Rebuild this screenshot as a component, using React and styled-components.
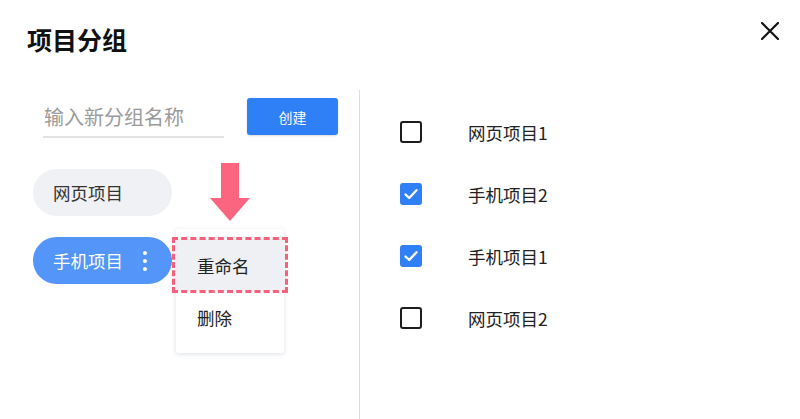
import React from "react";
import styled, { createGlobalStyle } from "styled-components";

const Global = createGlobalStyle`
  html, body { margin: 0; padding: 0; background: #fff; }
  * { box-sizing: border-box; }
  body { font-family: "Noto Sans CJK SC", "Noto Sans", sans-serif; }
`;

const Page = styled.div`
  width: 800px;
  height: 419px;
  background: #fff;
  display: flex;
  flex-direction: column;
  overflow: hidden;
  color: #222;
`;

const Header = styled.div`
  height: 90px;
  display: flex;
  justify-content: space-between;
  align-items: flex-start;
  padding: 22px 20px 0 27px;
`;

const Title = styled.h1`
  margin: 0;
  font-size: 25px;
  line-height: 34px;
  font-weight: 700;
  color: #111;
`;

const CloseBtn = styled.button`
  border: none;
  background: none;
  padding: 0;
  margin-top: -1px;
  width: 20px;
  height: 20px;
  display: flex;
  align-items: center;
  justify-content: center;
  cursor: pointer;
`;

const Main = styled.div`
  flex: 1;
  display: flex;
`;

const LeftCol = styled.div`
  position: relative;
  width: 360px;
  border-right: 1px solid #dcdcdc;
  padding: 8px 0 0 33px;
  display: flex;
  flex-direction: column;
`;

const InputRow = styled.div`
  display: flex;
  align-items: flex-start;
  gap: 23px;
  padding-left: 10px;
  margin-bottom: 31px;
`;

const NameInput = styled.input`
  width: 181px;
  height: 40px;
  border: none;
  border-bottom: 2px solid #e3e3e3;
  outline: none;
  padding: 0 0 2px 1px;
  font-family: inherit;
  font-size: 20px;
  color: #333;
  background: transparent;
  &::placeholder { color: #9a9a9a; }
`;

const CreateBtn = styled.button`
  width: 91px;
  height: 37px;
  border: none;
  border-radius: 3px;
  background: #2f7ff7;
  color: #fff;
  font-family: inherit;
  font-size: 14px;
  box-shadow: 0 1px 2px rgba(0,0,0,0.15);
`;

const Chips = styled.div`
  display: flex;
  flex-direction: column;
  gap: 21px;
`;

const Chip = styled.div`
  width: 139px;
  height: 47px;
  border-radius: 24px;
  padding: 0 25px 0 20px;
  display: flex;
  align-items: center;
  justify-content: space-between;
  font-size: 17.5px;
  background: ${p => (p.$active ? "#5395f8" : "#f0f1f4")};
  color: ${p => (p.$active ? "#fff" : "#333")};
`;

const Dots = styled.span`
  display: flex;
  flex-direction: column;
  gap: 4px;
  span {
    width: 4px;
    height: 4px;
    border-radius: 50%;
    background: #fff;
  }
`;

const Arrow = styled.svg`
  position: absolute;
  left: 210px;
  top: 73px;
`;

const Menu = styled.div`
  position: absolute;
  left: 176px;
  top: 139px;
  width: 108px;
  padding: 10px 0;
  background: #fff;
  border-radius: 3px;
  box-shadow: 0 1px 5px rgba(60, 80, 120, 0.18);
`;

const MenuItem = styled.div`
  position: relative;
  height: 52px;
  display: flex;
  align-items: center;
  padding-left: 21px;
  font-size: 17.5px;
  color: #222;
  background: ${p => (p.$hl ? "#eff0f3" : "transparent")};
  ${p =>
    p.$hl &&
    `&::after {
      content: "";
      position: absolute;
      inset: -2px -4px;
      border: 3px dashed #f6607c;
    }`}
`;

const RightCol = styled.div`
  flex: 1;
  padding: 11px 0 0 40px;
  display: flex;
  flex-direction: column;
`;

const Row = styled.label`
  height: 62px;
  display: flex;
  align-items: center;
  gap: 46px;
  font-size: 17.5px;
  color: #222;
`;

const Box = styled.span`
  width: 22px;
  height: 22px;
  border-radius: 3px;
  display: flex;
  align-items: center;
  justify-content: center;
  border: ${p => (p.$checked ? "none" : "2.5px solid #1d1d1d")};
  background: ${p => (p.$checked ? "#2f7ff7" : "#fff")};
`;

const items = [
  { label: "网页项目1", checked: false },
  { label: "手机项目2", checked: true },
  { label: "手机项目1", checked: true },
  { label: "网页项目2", checked: false },
];

export default function App() {
  return (
    <Page>
      <Global />
      <Header>
        <Title>项目分组</Title>
        <CloseBtn aria-label="close">
          <svg width="18" height="18" viewBox="0 0 18 18">
            <path d="M1 1L17 17M17 1L1 17" stroke="#111" strokeWidth="2.2" strokeLinecap="round" />
          </svg>
        </CloseBtn>
      </Header>
      <Main>
        <LeftCol>
          <InputRow>
            <NameInput placeholder="输入新分组名称" />
            <CreateBtn>创建</CreateBtn>
          </InputRow>
          <Chips>
            <Chip>网页项目</Chip>
            <Chip $active>
              手机项目
              <Dots><span /><span /><span /></Dots>
            </Chip>
          </Chips>
          <Arrow width="40" height="58" viewBox="0 0 40 58">
            <path d="M11 0H29V35H40L20 58L0 35H11Z" fill="#fb6580" />
          </Arrow>
          <Menu>
            <MenuItem $hl>重命名</MenuItem>
            <MenuItem>删除</MenuItem>
          </Menu>
        </LeftCol>
        <RightCol>
          {items.map(it => (
            <Row key={it.label}>
              <Box $checked={it.checked}>
                {it.checked && (
                  <svg width="16" height="16" viewBox="0 0 16 16">
                    <path d="M2.5 8.5L6.2 12L13.5 4.2" stroke="#fff" strokeWidth="2.4" fill="none" strokeLinecap="round" strokeLinejoin="round" />
                  </svg>
                )}
              </Box>
              {it.label}
            </Row>
          ))}
        </RightCol>
      </Main>
    </Page>
  );
}
